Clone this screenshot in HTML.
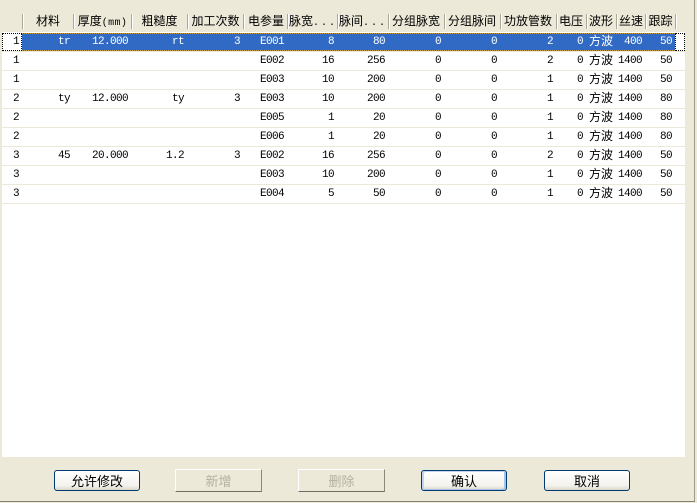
<!DOCTYPE html>
<html><head><meta charset="utf-8">
<style>
html,body{margin:0;padding:0}
body{width:697px;height:503px;position:relative;overflow:hidden;background:#ece9d8;font-family:"Liberation Sans","WenQuanYi Zen Hei","Noto Sans CJK SC",sans-serif}
.abs{position:absolute}
#white{left:2px;top:32px;width:683px;height:425px;background:#fff}
#hd{left:2px;top:11px;width:673px;height:21px;font-size:12px;color:#000}
#hd span{position:absolute;top:0;height:21px;line-height:19px;text-align:center;white-space:nowrap;font-family:"WenQuanYi Zen Hei","Noto Sans CJK SC",sans-serif}
#hd b{font:400 10px "Liberation Mono",monospace;letter-spacing:.4px}
#hd i{position:absolute;top:3px;height:15px;width:1px;background:#aca899;border-right:1px solid #fff}
table{position:absolute;left:2px;top:33px;border-collapse:collapse;table-layout:fixed;width:683px;font:11px/14px "Liberation Mono","WenQuanYi Zen Hei",monospace;letter-spacing:-.6px;color:#000}
td{height:18px;padding:0 3px 0 0;text-align:right;border-bottom:1px solid #ece9d8;white-space:nowrap;overflow:hidden;box-sizing:content-box}
td.c{font:12px/14px "WenQuanYi Zen Hei","Noto Sans CJK SC",sans-serif;letter-spacing:0;height:15px;padding-bottom:3px}
tr.sel td{background:#316ac5;color:#fff;border-bottom:1px solid #ece9d8}
tr.sel td.w{background:#fff;color:#000}
#f1{left:2px;top:33px;width:18px;height:16px;border:1px dotted #000}
#f2{left:675px;top:33px;width:8px;height:16px;border:1px dotted #000}
#o1{left:22px;top:33px;width:653px;height:1px;background:repeating-linear-gradient(90deg,#c89b3c 0 1px,#316ac5 1px 2px)}
#o2{left:22px;top:50px;width:653px;height:1px;background:repeating-linear-gradient(90deg,#c89b3c 0 1px,#316ac5 1px 2px)}
.btn{position:absolute;top:470px;width:86px;height:21px;box-sizing:border-box;border:1px solid #003c74;border-radius:3px;background:linear-gradient(#fff,#f4f3ee 75%,#dcd8ca);font:13px/19px "WenQuanYi Zen Hei","Noto Sans CJK SC",sans-serif;text-align:center;color:#000}
.def{box-shadow:inset 2px 1px 0 #c2d4f0,inset -2px -1px 0 #a9c0e8}
.dis{top:469px;width:87px;height:23px;border:1px solid;border-color:#fff #8a8878 #716f64 #fff;border-radius:0;background:#ece9d8;color:#b4b1a2;line-height:21px}
#bb{left:0;top:501px;width:695px;height:1px;background:#848272}
#rb{left:694px;top:0;width:1px;height:502px;background:#9d9a88}
</style></head>
<body>
<div class="abs" id="white"></div>
<div class="abs" id="hd">
<i style="left:20px"></i><i style="left:71px"></i><i style="left:129px"></i><i style="left:185px"></i><i style="left:241px"></i><i style="left:285px"></i><i style="left:335px"></i><i style="left:386px"></i><i style="left:442px"></i><i style="left:498px"></i><i style="left:554px"></i><i style="left:584px"></i><i style="left:614px"></i><i style="left:643px"></i><i style="left:673px"></i>
<span style="left:21px;width:50px">材料</span>
<span style="left:72px;width:57px">厚度<b>(mm)</b></span>
<span style="left:130px;width:55px">粗糙度</span>
<span style="left:186px;width:55px">加工次数</span>
<span style="left:242px;width:44px">电参量</span>
<span style="left:287px;width:50px;text-align:left;">脉宽<b style="letter-spacing:2px">...</b></span>
<span style="left:337px;width:50px;text-align:left;">脉间<b style="letter-spacing:2px">...</b></span>
<span style="left:386px;width:56px">分组脉宽</span>
<span style="left:442px;width:56px">分组脉间</span>
<span style="left:498px;width:56px">功放管数</span>
<span style="left:554px;width:30px">电压</span>
<span style="left:584px;width:30px">波形</span>
<span style="left:614px;width:30px">丝速</span>
<span style="left:644px;width:29px">跟踪</span>
</div>
<table>
<colgroup><col style="width:20px"><col style="width:51px"><col style="width:58px"><col style="width:56px"><col style="width:56px"><col style="width:44px"><col style="width:50px"><col style="width:51px"><col style="width:56px"><col style="width:56px"><col style="width:56px"><col style="width:30px"><col style="width:30px"><col style="width:29px"><col style="width:30px"><col style="width:10px"></colgroup>
<tr class="sel"><td class="w">1</td><td>tr</td><td>12.000</td><td>rt</td><td>3</td><td>E001</td><td>8</td><td>80</td><td>0</td><td>0</td><td>2</td><td>0</td><td class="c">方波</td><td>400</td><td>50</td><td class="w"></td></tr>
<tr><td>1</td><td></td><td></td><td></td><td></td><td>E002</td><td>16</td><td>256</td><td>0</td><td>0</td><td>2</td><td>0</td><td class="c">方波</td><td>1400</td><td>50</td><td></td></tr>
<tr><td>1</td><td></td><td></td><td></td><td></td><td>E003</td><td>10</td><td>200</td><td>0</td><td>0</td><td>1</td><td>0</td><td class="c">方波</td><td>1400</td><td>50</td><td></td></tr>
<tr><td>2</td><td>ty</td><td>12.000</td><td>ty</td><td>3</td><td>E003</td><td>10</td><td>200</td><td>0</td><td>0</td><td>1</td><td>0</td><td class="c">方波</td><td>1400</td><td>80</td><td></td></tr>
<tr><td>2</td><td></td><td></td><td></td><td></td><td>E005</td><td>1</td><td>20</td><td>0</td><td>0</td><td>1</td><td>0</td><td class="c">方波</td><td>1400</td><td>80</td><td></td></tr>
<tr><td>2</td><td></td><td></td><td></td><td></td><td>E006</td><td>1</td><td>20</td><td>0</td><td>0</td><td>1</td><td>0</td><td class="c">方波</td><td>1400</td><td>80</td><td></td></tr>
<tr><td>3</td><td>45</td><td>20.000</td><td>1.2</td><td>3</td><td>E002</td><td>16</td><td>256</td><td>0</td><td>0</td><td>2</td><td>0</td><td class="c">方波</td><td>1400</td><td>50</td><td></td></tr>
<tr><td>3</td><td></td><td></td><td></td><td></td><td>E003</td><td>10</td><td>200</td><td>0</td><td>0</td><td>1</td><td>0</td><td class="c">方波</td><td>1400</td><td>50</td><td></td></tr>
<tr><td>3</td><td></td><td></td><td></td><td></td><td>E004</td><td>5</td><td>50</td><td>0</td><td>0</td><td>1</td><td>0</td><td class="c">方波</td><td>1400</td><td>50</td><td></td></tr>
</table>
<div class="abs" id="o1"></div><div class="abs" id="o2"></div>
<div class="abs" id="f1"></div><div class="abs" id="f2"></div>
<div class="btn" style="left:54px">允许修改</div>
<div class="btn dis" style="left:175px">新增</div>
<div class="btn dis" style="left:298px">删除</div>
<div class="btn def" style="left:421px">确认</div>
<div class="btn" style="left:544px">取消</div>
<div class="abs" id="rb"></div>
<div class="abs" id="bb"></div>
</body></html>
